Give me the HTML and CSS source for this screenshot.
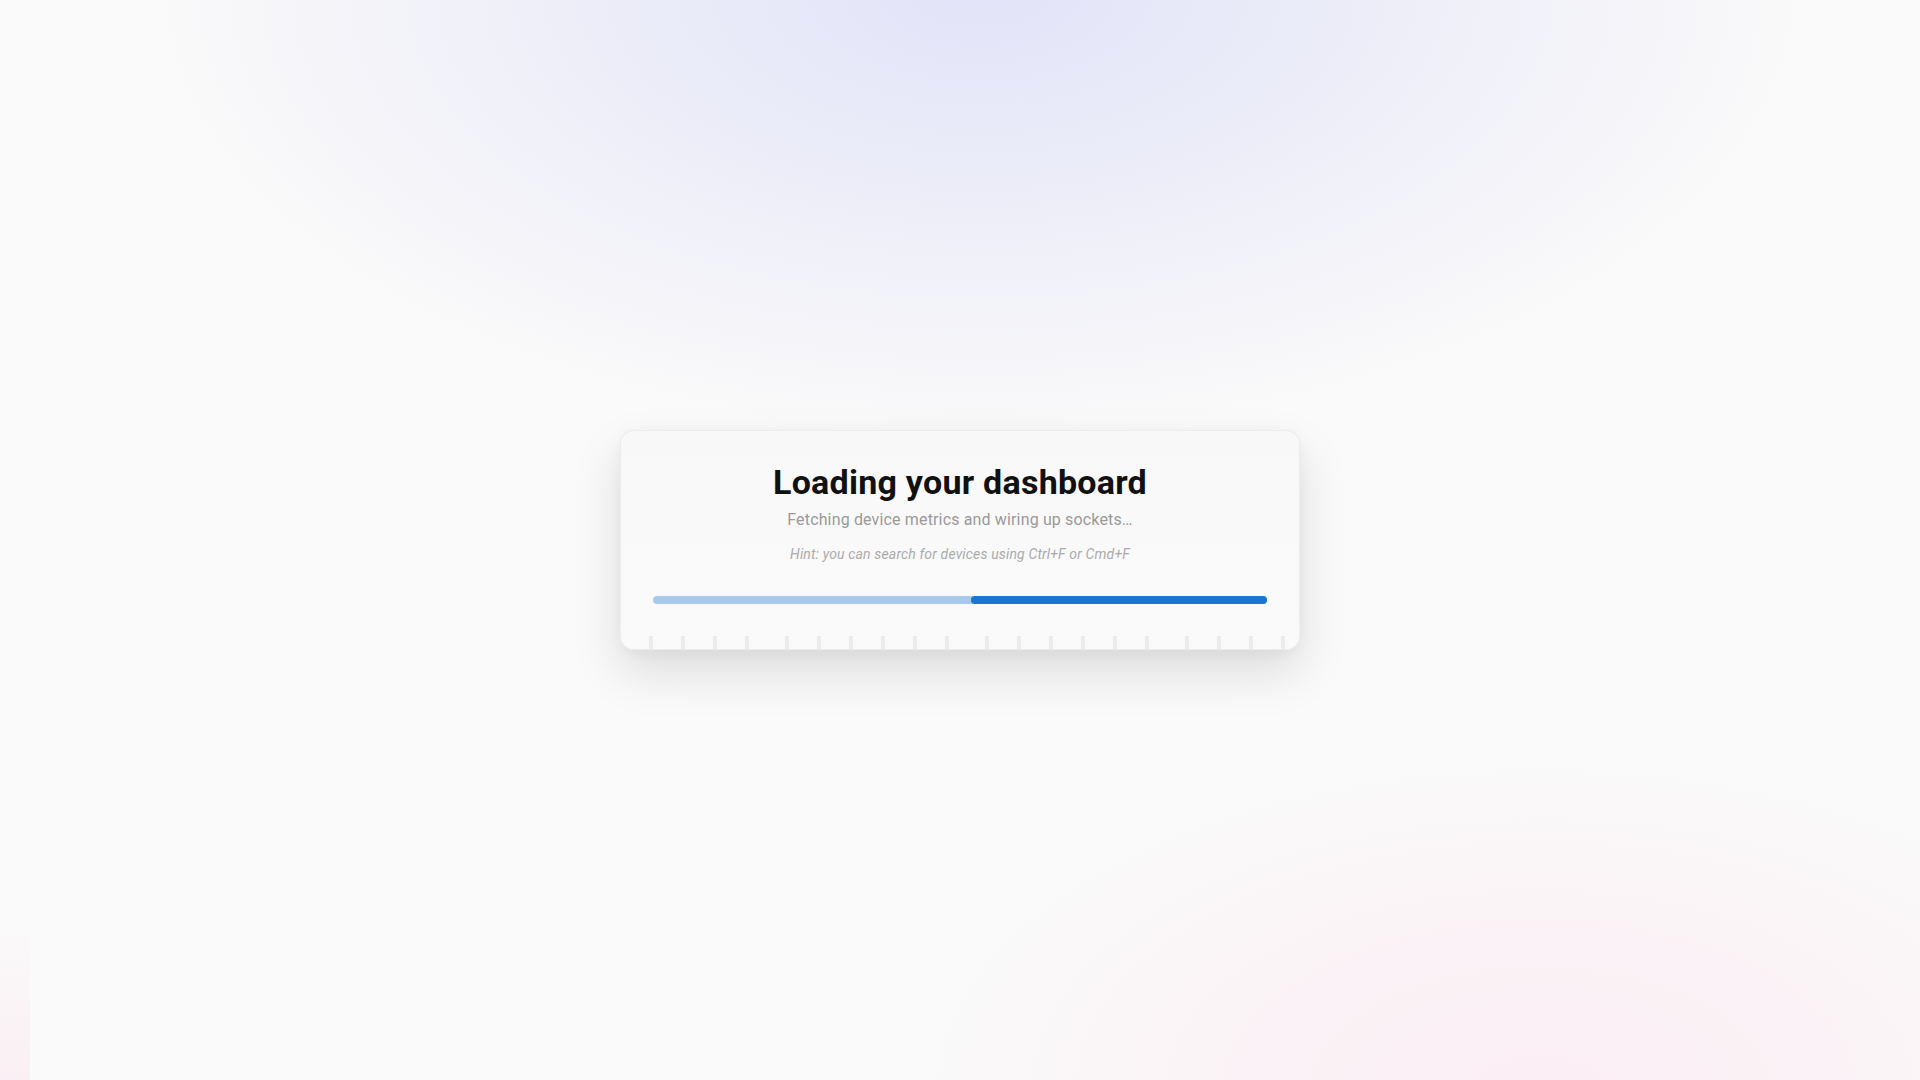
FILE: index.html
```html
<!DOCTYPE html>
<html lang="en">
<head>
<meta charset="utf-8">
<title>Loading your dashboard</title>
<link rel="stylesheet" href="styles.css">
</head>
<body>
<main class="page">
  <section class="card">
    <h1 class="title">Loading your dashboard</h1>
    <p class="subtitle">Fetching device metrics and wiring up sockets…</p>
    <p class="hint">Hint: you can search for devices using Ctrl+F or Cmd+F</p>
    <div class="progress"><div class="progress-bar"></div></div>
    <div class="ticks">
      <span class="tick"></span><span class="tick"></span><span class="tick"></span><span class="tick"></span>
      <span class="tick gap"></span><span class="tick"></span><span class="tick"></span><span class="tick"></span><span class="tick"></span><span class="tick"></span>
      <span class="tick gap"></span><span class="tick"></span><span class="tick"></span><span class="tick"></span><span class="tick"></span><span class="tick"></span>
      <span class="tick gap"></span><span class="tick"></span><span class="tick"></span><span class="tick"></span>
    </div>
  </section>
</main>
</body>
</html>
```

FILE: styles.css
```css
html, body {
  margin: 0;
  padding: 0;
  height: 100%;
}

body {
  font-family: Roboto, "Noto Sans", "Liberation Sans", sans-serif;
  background-color: #fafafa;
  background-image:
    linear-gradient(to bottom, rgba(251, 238, 244, 0) 0%, rgba(250, 238, 243, 0.9) 100%),
    radial-gradient(ellipse 640px 340px at 1540px 1090px, #fbeef4 0%, rgba(251, 238, 244, 0.6) 45%, rgba(250, 250, 250, 0) 100%),
    radial-gradient(ellipse 840px 450px at 980px -10px, #e2e3f8 0%, rgba(230, 231, 248, 0.75) 40%, rgba(250, 250, 250, 0) 100%);
  background-repeat: no-repeat;
  background-size: 30px 160px, 100% 100%, 100% 100%;
  background-position: left bottom, 0 0, 0 0;
}

.page {
  min-height: 100vh;
  display: flex;
  align-items: center;
  justify-content: center;
}

.card {
  width: 614px;
  padding: 30px 32px 0;
  border: 1px solid rgba(0, 0, 0, 0.05);
  border-radius: 14px;
  background: linear-gradient(to bottom, #f8f8f9 0%, #f9f9fa 40%, #fafafa 100%);
  box-shadow: 0 22px 50px rgba(0, 0, 0, 0.12), 0 4px 14px rgba(0, 0, 0, 0.04);
  overflow: hidden;
  text-align: center;
}

.title {
  margin: 0;
  font-size: 34px;
  line-height: 42px;
  font-weight: 700;
  color: #111111;
  letter-spacing: 0.00735em;
}

.subtitle {
  margin: 5px 0 0;
  font-size: 16px;
  line-height: 24px;
  letter-spacing: 0.00938em;
  color: #9a9a9a;
}

.hint {
  margin: 12px 0 0;
  font-size: 14px;
  line-height: 20px;
  letter-spacing: 0.01071em;
  font-style: italic;
  color: #ababab;
}

.progress {
  margin-top: 32px;
  height: 8px;
  border-radius: 4px;
  background: #a7caed;
  display: flex;
  justify-content: flex-end;
}

.progress-bar {
  width: 48.2%;
  height: 100%;
  border-radius: 4px;
  background: #1976d2;
}

.ticks {
  margin: 32px 0 0 -4px;
  height: 13px;
  display: flex;
  gap: 28px;
}

.tick {
  flex: 0 0 4px;
  height: 13px;
  background: #ececec;
}

.tick.gap {
  margin-left: 8px;
}
```
